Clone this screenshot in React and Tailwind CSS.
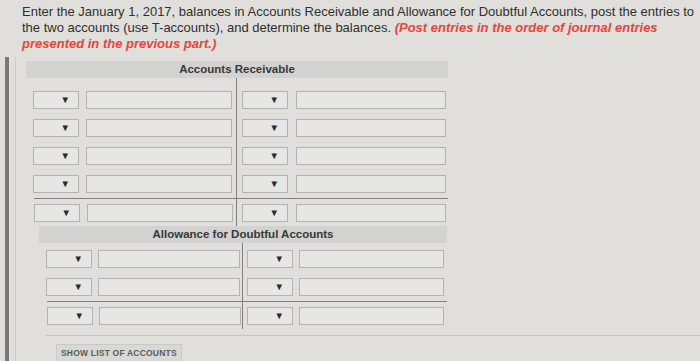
const font = "font-['Liberation_Sans',Arial,sans-serif]"

function Select({ w = 'w-[46px]' }) {
  return (
    <div className={`${w} h-[18px] shrink-0 border border-[#b3b3b1] bg-[#e6e6e4] flex items-center justify-end pr-[8px]`}>
      <span className="text-[9.5px] leading-none text-[#2b2b2b]">▼</span>
    </div>
  )
}

function Input({ w }) {
  return <div className={`${w} h-[18px] shrink-0 border border-[#b3b3b1] bg-[#e6e6e4]`} />
}

// one T-account: header bar + two columns of rows, a rule before the balance row
function TAccount({ title, rows, cols, left, right, top, className }) {
  return (
    <div className={className}>
      <div className={`h-[17px] flex items-center justify-center bg-[#d2d2d0] text-[11.5px] font-bold text-[#383838] ${font}`}>
        {title}
      </div>
      <div className={`grid ${cols}`}>
        <div className={top} />
        <div className={`${top} border-l border-[#80807e]`} />
        {Array.from({ length: rows }).map((_, i) => {
          const total = i === rows - 1
          return [
            <div key={`l${i}`} className={`h-[28px] flex items-center ${left.pad} ${left.gap} ${total ? 'border-t border-[#80807e] ml-[8px] !pl-[0px]' : ''}`}>
              <Select />
              <Input w={left.input} />
            </div>,
            <div key={`r${i}`} className={`h-[28px] flex items-center border-l border-[#80807e] ${right.pad} ${right.gap} ${total ? 'border-t' : ''}`}>
              <Select />
              <Input w={right.input} />
            </div>,
          ]
        })}
      </div>
    </div>
  )
}

export default function App() {
  return (
    <div className={`w-[700px] h-[361px] overflow-hidden bg-[#e0dfdb] ${font}`}>
      {/* question text */}
      <div className="pl-[22px] pt-[4px] text-[13px] leading-[16px] text-[#2f2f2f] whitespace-nowrap">
        Enter the January 1, 2017, balances in Accounts Receivable and Allowance for Doubtful Accounts, post the entries to
        <br />
        the two accounts (use T-accounts), and determine the balances.{' '}
        <span className="font-bold italic text-[#e2463f]">(Post entries in the order of journal entries</span>
        <br />
        <span className="font-bold italic text-[#e2463f]">presented in the previous part.)</span>
      </div>

      {/* answer panel */}
      <div className="mt-[5px] ml-[5px] border-l-[4px] border-[#7a7977] h-[320px]">
        <div className="ml-[6px] border-l border-[#c9c9c6] h-full pt-[4px] pl-[10px]">
          <TAccount
            title="Accounts Receivable"
            rows={5}
            top="h-[8px]"
            cols="grid-cols-[210px_212px]"
            left={{ pad: 'pl-[7px]', gap: 'gap-[7px]', input: 'w-[146px]' }}
            right={{ pad: 'pl-[5px]', gap: 'gap-[8px]', input: 'w-[150px]' }}
            className="w-[422px]"
          />
          <TAccount
            title="Allowance for Doubtful Accounts"
            rows={3}
            top="h-[2px]"
            cols="grid-cols-[203px_205px]"
            left={{ pad: 'pl-[7px]', gap: 'gap-[6px]', input: 'w-[142px]' }}
            right={{ pad: 'pl-[4px]', gap: 'gap-[6px]', input: 'w-[145px]' }}
            className="w-[408px] ml-[13px]"
          />

          <div className="mt-[6px] ml-[20px] border-t border-[#c4c4c1] pt-[3px] pl-[10px]">
            <div className="inline-flex items-center h-[19px] px-[4px] bg-[#d8d8d5] border border-[#c9c9c6] text-[8.5px] font-bold tracking-[0.2px] text-[#5b5b5b]">
              SHOW LIST OF ACCOUNTS
            </div>
          </div>
        </div>
      </div>
    </div>
  )
}
